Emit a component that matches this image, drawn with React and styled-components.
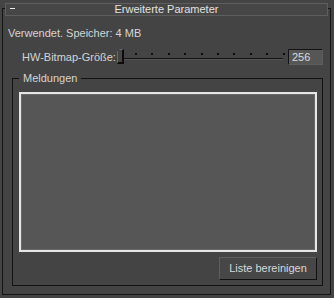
import styled, { createGlobalStyle } from "styled-components";

const GlobalStyle = createGlobalStyle`
  html, body {
    margin: 0;
    padding: 0;
    background: #444444;
  }
  body {
    width: 334px;
    height: 298px;
    overflow: hidden;
    font-family: "Liberation Sans", Arial, sans-serif;
    font-size: 11px;
    color: #d4d4d4;
  }
`;

const Page = styled.div`
  height: 298px;
  padding-top: 8px;
  padding-left: 2px;
  box-sizing: border-box;
  background: #444444;
`;

const Rollout = styled.section`
  width: 329px;
  height: 287px;
  box-sizing: border-box;
  border: 1px solid #141414;
  display: flex;
  flex-direction: column;
`;

const Header = styled.div`
  margin: -6px 2px 0 2px;
  height: 13px;
  box-sizing: border-box;
  border: 1px solid #5e5e5e;
  background: #464646;
  display: flex;
  align-items: center;
  justify-content: center;
  position: relative;
  color: #e2e2e2;
  line-height: 11px;
`;

const Toggle = styled.span`
  position: absolute;
  left: 4px;
  top: 4px;
  width: 5px;
  height: 1px;
  background: #e8e8e8;
`;

const Body = styled.div`
  padding: 0 5px;
  display: flex;
  flex-direction: column;
`;

const InfoLine = styled.div`
  margin-top: 11px;
  height: 13px;
  line-height: 13px;
  padding-left: 0;
`;

const SliderRow = styled.div`
  margin-top: 9px;
  height: 16px;
  display: flex;
  align-items: center;
  padding-left: 14px;
`;

const Label = styled.span`
  width: 95px;
  line-height: 13px;
`;

const Track = styled.div`
  position: relative;
  width: 166px;
  height: 16px;
`;

const TrackLine = styled.div`
  position: absolute;
  left: 0;
  right: 0;
  top: 9px;
  height: 1px;
  background: #121212;
  border-bottom: 1px solid #565656;
`;

const Tick = styled.span`
  position: absolute;
  top: 4px;
  width: 2px;
  height: 2px;
  background: #0e0e0e;
`;

const Thumb = styled.div`
  position: absolute;
  left: 0;
  top: 0;
  width: 7px;
  height: 15px;
  box-sizing: border-box;
  background: #444444;
  border-left: 1px solid #6a6a6a;
  border-top: 1px solid #6a6a6a;
  border-right: 2px solid #0c0c0c;
  border-bottom: 2px solid #0c0c0c;
  clip-path: polygon(0 3px, 3px 0, 100% 0, 100% 100%, 0 100%);
`;

const NumberBox = styled.div`
  margin-left: 5px;
  width: 35px;
  height: 16px;
  box-sizing: border-box;
  border: 1px solid #141414;
  border-right-color: #5e5e5e;
  border-bottom-color: #5e5e5e;
  background: #565656;
  padding-left: 3px;
  line-height: 14px;
  color: #dadada;
`;

const Group = styled.div`
  position: relative;
  margin: 13px 0 0 4px;
  width: 311px;
  height: 208px;
  box-sizing: border-box;
  border: 1px solid #121212;
  padding: 13px 5px 5px 6px;
  display: flex;
  flex-direction: column;
  align-items: flex-end;
`;

const Legend = styled.span`
  position: absolute;
  top: -7px;
  left: 6px;
  padding: 0 4px;
  background: #444444;
  line-height: 13px;
`;

const ListBox = styled.div`
  width: 298px;
  height: 160px;
  box-sizing: border-box;
  border: 2px solid #e6e6e6;
  box-shadow: inset 0 0 0 1px #6a6a6a;
  background: #565656;
`;

const Button = styled.button`
  margin-top: 5px;
  width: 98px;
  height: 23px;
  box-sizing: border-box;
  background: #474747;
  border: 1px solid #5e5e5e;
  border-right-color: #111111;
  border-bottom-color: #111111;
  color: #d8d8d8;
  font-family: "Liberation Sans", Arial, sans-serif;
  font-size: 11px;
  padding: 0 0 1px 0;
`;

const ticks = Array.from({ length: 10 }, (_, i) => 18 + i * 16.4);

export default function App() {
  return (
    <>
      <GlobalStyle />
      <Page>
        <Rollout>
          <Header>
            <Toggle />
            Erweiterte Parameter
          </Header>
          <Body>
            <InfoLine>Verwendet. Speicher: 4 MB</InfoLine>
            <SliderRow>
              <Label>HW-Bitmap-Größe:</Label>
              <Track>
                <TrackLine />
                {ticks.map((x, i) => (
                  <Tick key={i} style={{ left: Math.round(x) }} />
                ))}
                <Thumb />
              </Track>
              <NumberBox>256</NumberBox>
            </SliderRow>
            <Group>
              <Legend>Meldungen</Legend>
              <ListBox />
              <Button>Liste bereinigen</Button>
            </Group>
          </Body>
        </Rollout>
      </Page>
    </>
  );
}
